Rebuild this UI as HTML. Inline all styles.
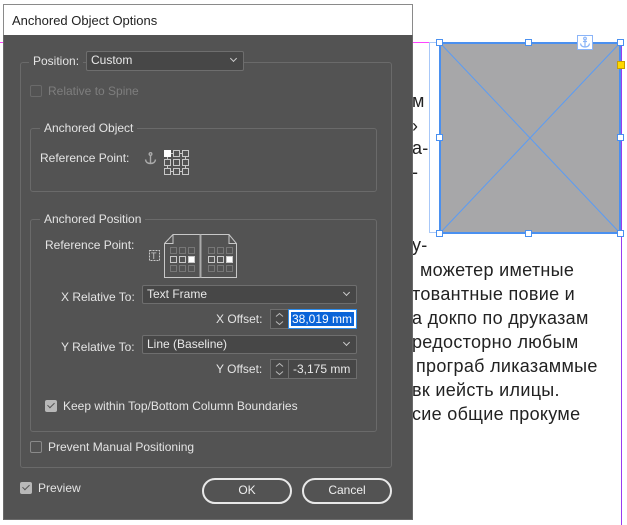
<!DOCTYPE html>
<html><head><meta charset="utf-8"><style>
*{margin:0;padding:0;box-sizing:border-box}
body{width:627px;height:525px;background:#fff;position:relative;overflow:hidden;font-family:"Liberation Sans",sans-serif}
.a{position:absolute}
.t{position:absolute;font-size:12px;color:#e4e4e4;white-space:nowrap;line-height:14px}
.bt{position:absolute;font-size:18px;color:#222;white-space:nowrap;line-height:20px;letter-spacing:0.3px}
.grp{position:absolute;border:1px solid #6a6a6a;border-radius:3px}
.lg{position:absolute;background:#535353;padding:0 4px;font-size:12px;color:#e4e4e4;line-height:14px}
.dd{position:absolute;background:#474747;border:1px solid #6e6e6e;border-radius:2px;font-size:12px;color:#e8e8e8;padding-left:4px;line-height:16px}
.dd:after{content:"";position:absolute;right:7px;top:4px;width:4px;height:4px;border-right:1px solid #ccc;border-bottom:1px solid #ccc;transform:rotate(45deg)}
.cb{position:absolute;width:12px;height:12px;border:1px solid #8a8a8a;border-radius:2px}
.cbc{position:absolute;width:12px;height:12px;background:#b8b8b8;border-radius:2px}
.cbc:after{content:"";position:absolute;left:4px;top:1px;width:3px;height:6px;border-right:1.5px solid #555;border-bottom:1.5px solid #555;transform:rotate(45deg)}
.btn{position:absolute;border:2px solid #e8e8e8;border-radius:13px;color:#eee;font-size:12px;text-align:center;line-height:21px}
.h{position:absolute;width:7px;height:7px;background:#fff;border:1px solid #4a90f0}
</style></head><body>
<div class="bt" style="left:412px;top:91px">м</div>
<div class="bt" style="left:412px;top:116px">›</div>
<div class="bt" style="left:412px;top:138px">а-</div>
<div class="bt" style="left:412px;top:162px">-</div>
<div class="bt" style="left:412px;top:235px">у-</div>
<div class="bt" style="left:420px;top:260px">можетер иметные</div>
<div class="bt" style="left:412px;top:284px">товантные повие и</div>
<div class="bt" style="left:412px;top:308px">а докпо по друказам</div>
<div class="bt" style="left:412px;top:332px">редосторно любым</div>
<div class="bt" style="left:416px;top:356px">пpограб ликазаммые</div>
<div class="bt" style="left:412px;top:380px">вк иейсть илицы.</div>
<div class="bt" style="left:412px;top:404px">сие общие прокуме</div>
<div class="a" style="left:0;top:42px;width:440px;height:1px;background:#ff44ff"></div>
<div class="a" style="left:621px;top:42px;width:1px;height:483px;background:#9a3cf0"></div>
<div class="a" style="left:429px;top:42px;width:12px;height:191px;border:1px solid #a8c8f8;border-right:none"></div>
<div class="a" style="left:439px;top:42px;width:182px;height:192px;background:#a7a7a9;border:2px solid #4a90f0"></div>
<svg class="a" style="left:439px;top:42px" width="182" height="192"><line x1="2" y1="2" x2="180" y2="190" stroke="#5a9cf5" stroke-width="1"/><line x1="180" y1="2" x2="2" y2="190" stroke="#5a9cf5" stroke-width="1"/></svg>
<div class="h" style="left:436px;top:39px"></div><div class="h" style="left:525px;top:39px"></div><div class="h" style="left:617px;top:39px"></div>
<div class="h" style="left:436px;top:134px"></div><div class="h" style="left:617px;top:134px"></div>
<div class="h" style="left:436px;top:230px"></div><div class="h" style="left:525px;top:230px"></div><div class="h" style="left:617px;top:230px"></div>
<svg class="a" style="left:577px;top:35px" width="16" height="15"><rect x="0.5" y="0.5" width="15" height="14" fill="#fff" stroke="#8ab4f8"/><g fill="none" stroke="#8ab4f8" stroke-width="1.2"><circle cx="8" cy="3.5" r="1.3"/><path d="M8 5v7M3.5 8.5Q4 12 8 12Q12 12 12.5 8.5M6 6.5h4"/></g></svg>
<div class="a" style="left:617px;top:61px;width:8px;height:8px;background:#ffd800;border:1px solid #c8a000"></div>
<!-- dialog -->
<div class="a" style="left:3px;top:4px;width:410px;height:36px;background:#fff;border:1px solid #8a8a8a;border-bottom:none"></div>
<div class="a" style="left:12px;top:13px;font-size:13px;color:#222">Anchored Object Options</div>
<div class="a" style="left:3px;top:35px;width:410px;height:485px;background:#535353;border:1px solid #6a6a6a;border-top:none"></div>
<div class="grp" style="left:20px;top:62px;width:372px;height:406px"></div>
<div class="lg" style="left:29px;top:54px">Position:</div>
<div class="dd" style="left:86px;top:51px;width:158px;height:20px">Custom</div>
<div class="cb" style="left:30px;top:85px;border-color:#6a6a6a"></div>
<div class="t" style="left:48px;top:84px;color:#7e7e7e">Relative to Spine</div>
<div class="grp" style="left:30px;top:128px;width:347px;height:64px"></div>
<div class="lg" style="left:40px;top:121px">Anchored Object</div>
<div class="t" style="left:40px;top:151px">Reference Point:</div>
<svg class="a" style="left:144px;top:152px" width="13" height="13" fill="none" stroke="#aaa" stroke-width="1.4"><circle cx="6.5" cy="2" r="1.3"/><path d="M6.5 3.5v8M1.5 7.5Q2 11.5 6.5 11.5Q11 11.5 11.5 7.5"/></svg>
<svg class="a" style="left:164px;top:150px" width="28" height="28" fill="none" stroke="#c8c8c8" stroke-width="1">
<rect x="0.5" y="0.5" width="6" height="6" fill="#fff" stroke="#fff"/><rect x="9.5" y="0.5" width="6" height="6"/><rect x="18.5" y="0.5" width="6" height="6"/>
<rect x="0.5" y="9.5" width="6" height="6"/><rect x="9.5" y="9.5" width="6" height="6"/><rect x="18.5" y="9.5" width="6" height="6"/>
<rect x="0.5" y="18.5" width="6" height="6"/><rect x="9.5" y="18.5" width="6" height="6"/><rect x="18.5" y="18.5" width="6" height="6"/>
<path d="M7 3.5h2M16 3.5h2M7 21.5h2M16 21.5h2M3.5 7v2M3.5 16v2M21.5 7v2M21.5 16v2"/></svg>
<div class="grp" style="left:30px;top:219px;width:347px;height:213px"></div>
<div class="lg" style="left:40px;top:212px">Anchored Position</div>
<div class="t" style="left:45px;top:238px">Reference Point:</div>
<svg class="a" style="left:148px;top:233px" width="92" height="47" fill="none" stroke="#c8c8c8" stroke-width="1">
<rect x="1.5" y="17.5" width="10" height="10" stroke-dasharray="2 1"/><text x="3" y="26" font-size="9" fill="#c8c8c8" stroke="none" font-family="Liberation Sans">T</text>
<path d="M16.5 44.5V10.5L25 1.5H81L88.5 10.5V44.5Z"/>
<path d="M16.5 10.5H25V1.5M81 1.5V10.5H88.5"/>
<path d="M52.5 1.5V44.5" stroke="#aaa" stroke-width="2"/>
<g stroke="#777"><rect x="22.5" y="14.5" width="6" height="6"/><rect x="31.5" y="14.5" width="6" height="6"/><rect x="40.5" y="14.5" width="6" height="6"/>
<rect x="22.5" y="32.5" width="6" height="6"/><rect x="31.5" y="32.5" width="6" height="6"/><rect x="40.5" y="32.5" width="6" height="6"/>
<rect x="60.5" y="14.5" width="6" height="6"/><rect x="69.5" y="14.5" width="6" height="6"/><rect x="78.5" y="14.5" width="6" height="6"/>
<rect x="60.5" y="32.5" width="6" height="6"/><rect x="69.5" y="32.5" width="6" height="6"/><rect x="78.5" y="32.5" width="6" height="6"/></g>
<rect x="22.5" y="23.5" width="6" height="6"/><rect x="31.5" y="23.5" width="6" height="6"/><rect x="40.5" y="23.5" width="6" height="6" fill="#fff"/>
<rect x="60.5" y="23.5" width="6" height="6"/><rect x="69.5" y="23.5" width="6" height="6"/><rect x="78.5" y="23.5" width="6" height="6" fill="#fff"/>
</svg>
<div class="t" style="left:61px;top:290px">X Relative To:</div>
<div class="dd" style="left:142px;top:285px;width:215px;height:19px">Text Frame</div>
<div class="t" style="left:216px;top:312px">X Offset:</div>
<svg class="a" style="left:270px;top:309px" width="19" height="20"><rect x="0.5" y="0.5" width="18" height="19" fill="#474747" stroke="#6e6e6e"/><path d="M6 7.5L9.5 4.5L13 7.5M6 12.5L9.5 15.5L13 12.5" fill="none" stroke="#bbb"/></svg>
<div class="a" style="left:288px;top:309px;width:69px;height:20px;border:1px solid #2d8ceb;background:#fff;padding:2px"><div style="background:#0a64d8;color:#fff;font-size:12px;line-height:14px;padding-left:1px">38,019 mm</div></div>
<div class="t" style="left:61px;top:340px">Y Relative To:</div>
<div class="dd" style="left:142px;top:335px;width:215px;height:19px">Line (Baseline)</div>
<div class="t" style="left:216px;top:362px">Y Offset:</div>
<svg class="a" style="left:270px;top:359px" width="19" height="20"><rect x="0.5" y="0.5" width="18" height="19" fill="#474747" stroke="#6e6e6e"/><path d="M6 7.5L9.5 4.5L13 7.5M6 12.5L9.5 15.5L13 12.5" fill="none" stroke="#bbb"/></svg>
<div class="a" style="left:288px;top:359px;width:69px;height:20px;border:1px solid #6e6e6e;background:#474747;color:#e8e8e8;font-size:12px;line-height:18px;padding-left:4px">-3,175 mm</div>
<div class="cbc" style="left:45px;top:400px"></div>
<div class="t" style="left:63px;top:399px">Keep within Top/Bottom Column Boundaries</div>
<div class="cb" style="left:30px;top:441px"></div>
<div class="t" style="left:48px;top:440px">Prevent Manual Positioning</div>
<div class="cbc" style="left:20px;top:482px"></div>
<div class="t" style="left:38px;top:481px">Preview</div>
<div class="btn" style="left:202px;top:478px;width:90px;height:26px">OK</div>
<div class="btn" style="left:302px;top:478px;width:90px;height:26px">Cancel</div>
</body></html>
